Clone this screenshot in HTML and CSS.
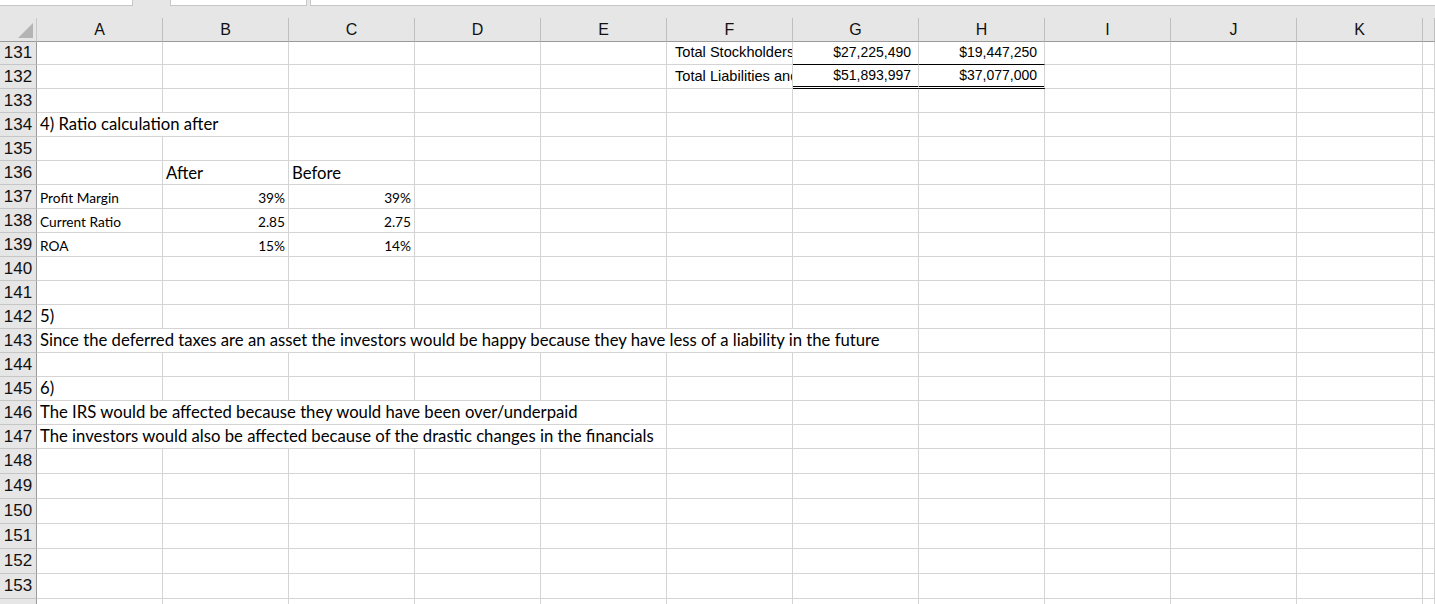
FILE: index.html
```html
<!DOCTYPE html>
<html>
<head>
<meta charset="utf-8">
<title>Sheet</title>
<link rel="stylesheet" href="styles.css">
</head>
<body>
<div class="topbar">
  <div class="box box1"></div>
  <div class="box box2"></div>
  <div class="box box3"></div>
</div>
<div class="row hdr">
  <div class="h corner"><svg class="tri" width="15" height="15" viewBox="0 0 15 15"><polygon points="15,0 15,15 0,15" fill="#b4b4b4"/></svg></div>
  <div class="h">A</div><div class="h">B</div><div class="h">C</div><div class="h">D</div><div class="h">E</div><div class="h">F</div><div class="h">G</div><div class="h">H</div><div class="h">I</div><div class="h">J</div><div class="h">K</div><div class="h"></div>
</div>

<div class="row"><div class="rh">131</div><div class="c"></div><div class="c"></div><div class="c"></div><div class="c"></div><div class="c"></div><div class="c ar indent">Total Stockholders' Equity</div><div class="c ar num acc single">$27,225,490</div><div class="c ar num acc single">$19,447,250</div><div class="c"></div><div class="c"></div><div class="c"></div><div class="c"></div></div>
<div class="row"><div class="rh">132</div><div class="c"></div><div class="c"></div><div class="c"></div><div class="c"></div><div class="c"></div><div class="c ar indent">Total Liabilities and Stockholders' Equity</div><div class="c ar num acc double">$51,893,997</div><div class="c ar num acc double">$37,077,000</div><div class="c"></div><div class="c"></div><div class="c"></div><div class="c"></div></div>
<div class="row"><div class="rh">133</div><div class="c"></div><div class="c"></div><div class="c"></div><div class="c"></div><div class="c"></div><div class="c"></div><div class="c"></div><div class="c"></div><div class="c"></div><div class="c"></div><div class="c"></div><div class="c"></div></div>
<div class="row"><div class="rh">134</div><div class="c cal span2">4) Ratio calculation after</div><div class="c"></div><div class="c"></div><div class="c"></div><div class="c"></div><div class="c"></div><div class="c"></div><div class="c"></div><div class="c"></div><div class="c"></div><div class="c"></div></div>
<div class="row"><div class="rh">135</div><div class="c"></div><div class="c"></div><div class="c"></div><div class="c"></div><div class="c"></div><div class="c"></div><div class="c"></div><div class="c"></div><div class="c"></div><div class="c"></div><div class="c"></div><div class="c"></div></div>
<div class="row"><div class="rh">136</div><div class="c"></div><div class="c cal low">After</div><div class="c cal low">Before</div><div class="c"></div><div class="c"></div><div class="c"></div><div class="c"></div><div class="c"></div><div class="c"></div><div class="c"></div><div class="c"></div><div class="c"></div></div>
<div class="row"><div class="rh">137</div><div class="c sm">Profit Margin</div><div class="c sm num">39%</div><div class="c sm num">39%</div><div class="c"></div><div class="c"></div><div class="c"></div><div class="c"></div><div class="c"></div><div class="c"></div><div class="c"></div><div class="c"></div><div class="c"></div></div>
<div class="row"><div class="rh">138</div><div class="c sm">Current Ratio</div><div class="c sm num">2.85</div><div class="c sm num">2.75</div><div class="c"></div><div class="c"></div><div class="c"></div><div class="c"></div><div class="c"></div><div class="c"></div><div class="c"></div><div class="c"></div><div class="c"></div></div>
<div class="row"><div class="rh">139</div><div class="c sm">ROA</div><div class="c sm num">15%</div><div class="c sm num">14%</div><div class="c"></div><div class="c"></div><div class="c"></div><div class="c"></div><div class="c"></div><div class="c"></div><div class="c"></div><div class="c"></div><div class="c"></div></div>
<div class="row"><div class="rh">140</div><div class="c"></div><div class="c"></div><div class="c"></div><div class="c"></div><div class="c"></div><div class="c"></div><div class="c"></div><div class="c"></div><div class="c"></div><div class="c"></div><div class="c"></div><div class="c"></div></div>
<div class="row"><div class="rh">141</div><div class="c"></div><div class="c"></div><div class="c"></div><div class="c"></div><div class="c"></div><div class="c"></div><div class="c"></div><div class="c"></div><div class="c"></div><div class="c"></div><div class="c"></div><div class="c"></div></div>
<div class="row"><div class="rh">142</div><div class="c cal">5)</div><div class="c"></div><div class="c"></div><div class="c"></div><div class="c"></div><div class="c"></div><div class="c"></div><div class="c"></div><div class="c"></div><div class="c"></div><div class="c"></div><div class="c"></div></div>
<div class="row"><div class="rh">143</div><div class="c cal span7">Since the deferred taxes are an asset the investors would be happy because they have less of a liability in the future</div><div class="c"></div><div class="c"></div><div class="c"></div><div class="c"></div><div class="c"></div></div>
<div class="row"><div class="rh">144</div><div class="c"></div><div class="c"></div><div class="c"></div><div class="c"></div><div class="c"></div><div class="c"></div><div class="c"></div><div class="c"></div><div class="c"></div><div class="c"></div><div class="c"></div><div class="c"></div></div>
<div class="row"><div class="rh">145</div><div class="c cal">6)</div><div class="c"></div><div class="c"></div><div class="c"></div><div class="c"></div><div class="c"></div><div class="c"></div><div class="c"></div><div class="c"></div><div class="c"></div><div class="c"></div><div class="c"></div></div>
<div class="row"><div class="rh">146</div><div class="c cal span5">The IRS would be affected because they would have been over/underpaid</div><div class="c"></div><div class="c"></div><div class="c"></div><div class="c"></div><div class="c"></div><div class="c"></div><div class="c"></div></div>
<div class="row"><div class="rh">147</div><div class="c cal span5">The investors would also be affected because of the drastic changes in the financials</div><div class="c"></div><div class="c"></div><div class="c"></div><div class="c"></div><div class="c"></div><div class="c"></div><div class="c"></div></div>
<div class="row tall"><div class="rh">148</div><div class="c"></div><div class="c"></div><div class="c"></div><div class="c"></div><div class="c"></div><div class="c"></div><div class="c"></div><div class="c"></div><div class="c"></div><div class="c"></div><div class="c"></div><div class="c"></div></div>
<div class="row tall"><div class="rh">149</div><div class="c"></div><div class="c"></div><div class="c"></div><div class="c"></div><div class="c"></div><div class="c"></div><div class="c"></div><div class="c"></div><div class="c"></div><div class="c"></div><div class="c"></div><div class="c"></div></div>
<div class="row tall"><div class="rh">150</div><div class="c"></div><div class="c"></div><div class="c"></div><div class="c"></div><div class="c"></div><div class="c"></div><div class="c"></div><div class="c"></div><div class="c"></div><div class="c"></div><div class="c"></div><div class="c"></div></div>
<div class="row tall"><div class="rh">151</div><div class="c"></div><div class="c"></div><div class="c"></div><div class="c"></div><div class="c"></div><div class="c"></div><div class="c"></div><div class="c"></div><div class="c"></div><div class="c"></div><div class="c"></div><div class="c"></div></div>
<div class="row tall"><div class="rh">152</div><div class="c"></div><div class="c"></div><div class="c"></div><div class="c"></div><div class="c"></div><div class="c"></div><div class="c"></div><div class="c"></div><div class="c"></div><div class="c"></div><div class="c"></div><div class="c"></div></div>
<div class="row tall"><div class="rh">153</div><div class="c"></div><div class="c"></div><div class="c"></div><div class="c"></div><div class="c"></div><div class="c"></div><div class="c"></div><div class="c"></div><div class="c"></div><div class="c"></div><div class="c"></div><div class="c"></div></div>
<div class="row tall"><div class="rh"></div><div class="c"></div><div class="c"></div><div class="c"></div><div class="c"></div><div class="c"></div><div class="c"></div><div class="c"></div><div class="c"></div><div class="c"></div><div class="c"></div><div class="c"></div><div class="c"></div></div>
</body>
</html>
```

FILE: styles.css
```css
* { box-sizing: border-box; }
html, body { margin: 0; padding: 0; }
body {
  width: 1435px;
  height: 604px;
  overflow: hidden;
  background: #ffffff;
  color: #000000;
  font-family: "Liberation Sans", Arial, sans-serif;
}

.topbar {
  height: 18px;
  background: #e6e6e6;
  display: flex;
  align-items: flex-start;
}
.box {
  height: 6px;
  background: #ffffff;
  border: 1px solid #c6c6c6;
  border-top: none;
}
.box1 { width: 133px; border-left: none; }
.box2 { width: 137px; margin-left: 37px; }
.box3 { flex: 1; margin-left: 3px; border-right: none; }

.row {
  display: grid;
  grid-template-columns: 37px repeat(11, 126px) 1fr;
  height: 24px;
}
.row.tall { height: 25px; }

.hdr { height: 23px; background: #e6e6e6; }
.h {
  position: relative;
  border-right: 1px solid #bfbfbf;
  border-bottom: 1px solid #9b9b9b;
  font-size: 16px;
  line-height: 23px;
  text-align: center;
  color: #111111;
}
.corner { border-right-color: #c8c8c8; }
.tri { position: absolute; right: 3px; bottom: 3px; }

.rh {
  background: #e6e6e6;
  border-right: 1px solid #9b9b9b;
  border-bottom: 1px solid #c6c6c6;
  font-size: 17px;
  line-height: 23px;
  text-align: center;
  color: #111111;
}
.row.tall .rh { line-height: 24px; }

.c {
  border-right: 1px solid #d4d4d4;
  border-bottom: 1px solid #d4d4d4;
  overflow: hidden;
  white-space: nowrap;
  padding: 0 3px;
  line-height: 23px;
  background: #ffffff;
}

.span2 { grid-column: span 2; }
.span5 { grid-column: span 5; }
.span7 { grid-column: span 7; }

.cal {
  font-family: Lato, "Open Sans", sans-serif;
  font-size: 16.7px;
  line-height: 23px;
}
.low { padding-top: 1px; }
.sm {
  font-family: Lato, "Open Sans", sans-serif;
  font-size: 13.7px;
  padding-top: 1px;
}
.ar { font-size: 14.6px; }
.indent { padding-left: 8px; text-overflow: clip; }
.num { text-align: right; }
.acc { font-size: 14px; padding-right: 7px; }
.single { border-bottom: 1px solid #000000; }
.double { border-bottom: 3px double #000000; line-height: 21px; }
```
